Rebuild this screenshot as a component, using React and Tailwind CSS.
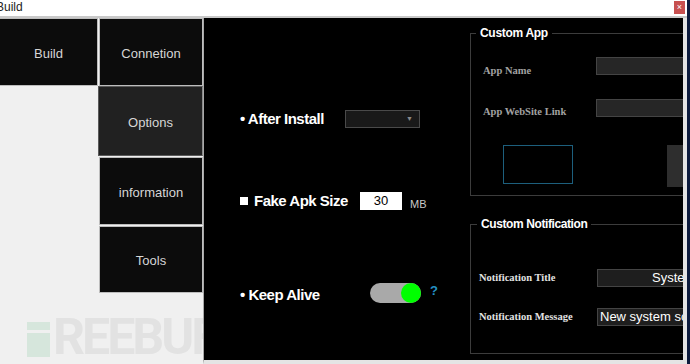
import React from 'react';

const Tab = ({ label, className }) => (
    <div className={`flex items-center justify-center pt-[3px] text-[13px] text-[#d6d6d6] ${className}`}>
        {label}
    </div>
);

const Field = ({ label, value, labelClass, inputClass }) => (
    <div className="flex items-start">
        <span className={`shrink-0 font-['Liberation_Serif',serif] font-bold text-[10.5px] leading-[12px] ${labelClass}`}>
            {label}
        </span>
        <div className={`h-[18px] w-[120px] shrink-0 bg-[#1e1e1e] border border-[#444] text-[13px] leading-[16px] text-white whitespace-nowrap overflow-hidden ${inputClass}`}>
            {value}
        </div>
    </div>
);

const App = () => {
    return (
        <div className="w-[690px] h-[364px] flex overflow-hidden bg-[#0d1b3d] font-['Liberation_Sans',Arial,sans-serif]">
            <div className="w-[687px] shrink-0 h-full flex flex-col bg-[#f0f0f0]">
                {/* Title bar */}
                <div className="h-[16px] shrink-0 bg-white flex items-start justify-between">
                    <span className="ml-[-4px] mt-[1px] text-[12px] leading-[13px] text-[#222]">Build</span>
                    <div className="w-[11px] h-[13px] mt-[1px] mr-[2px] bg-[#c75050] flex items-center justify-center text-[9px] leading-none text-white">×</div>
                </div>
                <div className="h-[2px] shrink-0 bg-[#c9c9c9]"></div>

                <div className="flex-1 flex min-h-0">
                    {/* Side tabs */}
                    <div className="w-[203px] shrink-0 flex flex-col overflow-hidden">
                        <div className="flex gap-px">
                            <Tab label="Build" className="w-[98px] h-[68px] bg-[#0c0c0c] border-y border-r border-[#bdbdbd]" />
                            <Tab label="Connetion" className="w-[104px] h-[68px] bg-[#0c0c0c] border border-[#bdbdbd]" />
                        </div>
                        <Tab label="Options" className="ml-[98px] w-[105px] h-[70px] bg-[#212121] border border-[#5a5a5a] border-r-[#8a8a8a]" />
                        <Tab label="information" className="ml-[99px] mt-px w-[104px] h-[68px] bg-[#0c0c0c] border border-[#bdbdbd]" />
                        <Tab label="Tools" className="ml-[99px] mt-px w-[104px] h-[67px] bg-[#0c0c0c] border border-[#bdbdbd]" />

                        {/* watermark */}
                        <div className="mt-[22px] flex items-start h-[42px]">
                            <div className="ml-[18px] w-[10px] h-[42px] bg-[#d6e6dc]"></div>
                            <div className="ml-[9px] flex flex-col gap-[3px] pt-[7px]">
                                <div className="w-[23px] h-[8px] bg-[#d6e6dc]"></div>
                                <div className="w-[23px] h-[24px] bg-[#d6e6dc]"></div>
                            </div>
                            <span className="ml-[3px] mt-[-2px] font-['Roboto',sans-serif] font-bold text-[50px] leading-[48px] tracking-[-3px] text-[#e2e2e2] whitespace-nowrap">
                                REEBUF
                            </span>
                        </div>
                    </div>

                    {/* Main panel */}
                    <div className="w-[484px] shrink-0 flex bg-black border-l border-l-[#a8a8a8] border-r-[4px] border-r-[#e4e4e4] border-b-[4px] border-b-[#e4e4e4] overflow-hidden">
                        {/* Options column */}
                        <div className="w-[266px] shrink-0 flex flex-col pl-[36px] pt-[92px] text-white">
                            <div className="flex items-center h-[18px]">
                                <span className="w-[105px] text-[15px] font-bold tracking-[-0.5px] whitespace-nowrap">• After Install</span>
                                <div className="w-[75px] h-[18px] bg-[#191919] border border-[#4a4a4a] flex items-center justify-end pr-[6px]">
                                    <span className="text-[7px] text-[#8a8a8a]">▼</span>
                                </div>
                            </div>

                            <div className="flex items-center h-[18px] mt-[64px]">
                                <div className="w-[120px] flex items-center">
                                    <span className="w-[8px] h-[8px] bg-white shrink-0"></span>
                                    <span className="ml-[6px] text-[15px] font-bold tracking-[-0.5px] whitespace-nowrap">Fake Apk Size</span>
                                </div>
                                <div className="w-[42px] h-[18px] bg-white text-black text-[13px] leading-[18px] text-center">30</div>
                                <span className="ml-[8px] mt-[6px] text-[11px] text-[#c8c8c8]">MB</span>
                            </div>

                            <div className="flex items-center h-[20px] mt-[73px]">
                                <span className="w-[130px] mt-[4px] text-[15px] font-bold tracking-[-0.5px] whitespace-nowrap">• Keep Alive</span>
                                <div className="w-[51px] h-[20px] rounded-full bg-[#a9a9a9] flex justify-end">
                                    <div className="w-[20px] h-[20px] rounded-full bg-[#00ff00]"></div>
                                </div>
                                <span className="ml-[9px] mt-[-4px] text-[13px] font-bold text-[#2490c4]">?</span>
                            </div>
                        </div>

                        {/* Custom groups */}
                        <div className="w-[213px] shrink-0 overflow-hidden flex flex-col pt-[8px]">
                            <fieldset className="w-[240px] min-w-0 h-[170px] border border-[#3c3c3c]">
                                <legend className="ml-[5px] px-[4px] text-[12px] leading-[14px] font-bold tracking-[-0.3px] text-white">Custom App</legend>
                                <div className="mt-[17px]">
                                    <Field label="App Name" labelClass="w-[125px] pl-[12px] mt-[8px] text-[#a2a2a2]" inputClass="bg-[#262626] border-[#3a3a3a]" />
                                </div>
                                <div className="mt-[22px]">
                                    <Field label="App WebSite Link" labelClass="w-[125px] pl-[12px] mt-[7px] text-[#a2a2a2]" inputClass="bg-[#262626] border-[#3a3a3a]" />
                                </div>
                                <div className="mt-[27px] flex items-start">
                                    <div className="ml-[32px] w-[70px] h-[39px] border border-[#1d5f7d]"></div>
                                    <div className="ml-[94px] w-[40px] h-[42px] bg-[#2e2e2e]"></div>
                                </div>
                            </fieldset>

                            <fieldset className="mt-[21px] w-[240px] min-w-0 h-[137px] border border-[#3c3c3c]">
                                <legend className="ml-[6px] px-[4px] text-[12px] leading-[14px] font-bold tracking-[-0.4px] text-white">Custom Notification</legend>
                                <div className="mt-[38px]">
                                    <Field label="Notification Title" value="System" labelClass="w-[126px] pl-[8px] mt-[3px] text-[#e2e2e2]" inputClass="pl-[54px]" />
                                </div>
                                <div className="mt-[21px]">
                                    <Field label="Notification Message" value="New system software" labelClass="w-[126px] pl-[8px] mt-[3px] text-[#e2e2e2]" inputClass="pl-[2px]" />
                                </div>
                            </fieldset>
                        </div>
                    </div>
                </div>
            </div>
            <div className="w-[3px] h-full bg-[#0d1b3d]"></div>
        </div>
    );
};

export default App;
